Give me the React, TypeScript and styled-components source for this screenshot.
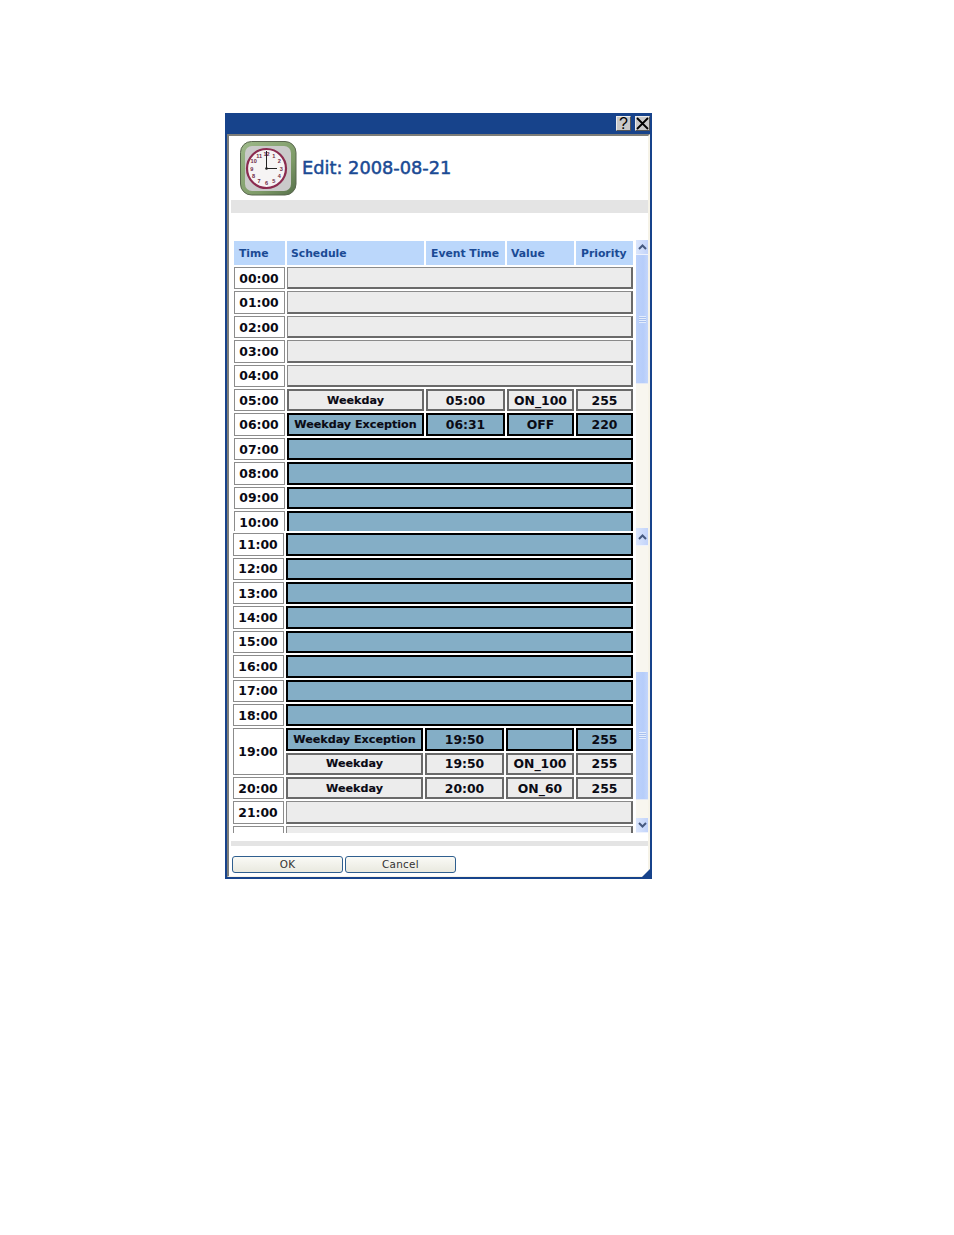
import React from "react";
import styled, { createGlobalStyle } from "styled-components";

const Global = createGlobalStyle`
  html, body { margin: 0; padding: 0; background: #fff; }
  body { font-family: "DejaVu Sans", Verdana, sans-serif; }
`;

const Page = styled.div`
  padding: 113px 0 0 225px;
  height: 1122px;
`;

const Dialog = styled.div`
  position: relative;
  box-sizing: border-box;
  width: 427px;
  height: 766px;
  background: #17438b;
  padding: 0 2px 2px 2px;
  display: flex;
  flex-direction: column;
`;

const TitleBar = styled.div`
  height: 21px;
  flex: none;
  display: flex;
  justify-content: flex-end;
  align-items: flex-start;
  gap: 4px;
  padding-top: 3px;
  box-sizing: border-box;
`;

const TitleButton = styled.div`
  width: 15px;
  height: 15px;
  box-sizing: border-box;
  background: #c8c8c8;
  border: 1px solid #ececec;
  border-right-color: #555;
  border-bottom-color: #555;
  color: #000;
  display: flex;
  align-items: center;
  justify-content: center;
  font: 400 16px "Liberation Sans", sans-serif;
  line-height: 1;
`;

const Panel = styled.div`
  flex: 1;
  min-height: 0;
  background: #fff;
  box-sizing: border-box;
  border-top: 2px solid #7d7d78;
  border-left: 2px solid #7d7d78;
  border-right: 2px solid #f6f3e8;
  border-bottom: 1px solid #f6f3e8;
  display: flex;
  flex-direction: column;
`;

const Header = styled.div`
  height: 64px;
  flex: none;
  box-sizing: border-box;
  padding: 5px 0 0 11px;
  display: flex;
  align-items: flex-start;
  gap: 5px;
`;

const Title = styled.h1`
  margin: 15px 0 0;
  font: 400 17.8px "DejaVu Sans", sans-serif;
  line-height: 24px;
  color: #1a4a94;
  -webkit-text-stroke: 0.5px #1a4a94;
  white-space: nowrap;
`;

const Band = styled.div<{ $h: number }>`
  flex: none;
  height: ${(p) => p.$h}px;
  margin-left: 2px;
  background: #e4e4e4;
`;

const Spacer = styled.div<{ $h: number }>`
  flex: none;
  height: ${(p) => p.$h}px;
`;

const Segment = styled.div<{ $h: number; $pl: number }>`
  flex: none;
  height: ${(p) => p.$h}px;
  padding-left: ${(p) => p.$pl}px;
  display: flex;
  align-items: flex-start;
`;

const Clip = styled.div<{ $h: number; $w: number; $pt: number }>`
  flex: none;
  width: ${(p) => p.$w}px;
  height: ${(p) => p.$h}px;
  box-sizing: border-box;
  padding-top: ${(p) => p.$pt}px;
  overflow: hidden;
`;

const Grid = styled.div<{ $cols: string; $head?: boolean }>`
  display: grid;
  grid-template-columns: ${(p) => p.$cols};
  ${(p) => (p.$head ? "grid-template-rows: 24.1px;" : "")}
  grid-auto-rows: 22.4px;
  gap: 2px;
`;

const HeadCell = styled.div<{ $pl: number }>`
  background: #bbd7fb;
  color: #1a4a94;
  font: 700 10.8px "DejaVu Sans", sans-serif;
  display: flex;
  align-items: flex-end;
  padding: 0 0 5px ${(p) => p.$pl}px;
  box-sizing: border-box;
  white-space: nowrap;
`;

const Cell = styled.div<{ $sel?: boolean; $span?: boolean; $name?: boolean }>`
  box-sizing: border-box;
  ${(p) => (p.$span ? "grid-column: 2 / -1;" : "")}
  background: ${(p) => (p.$sel ? "#84aec6" : "#ececec")};
  border: 2px solid ${(p) => (p.$sel ? "#000" : "#6a6a6a")};
  ${(p) =>
    p.$span && !p.$sel
      ? "border-top: 1px solid #8a8a8a; border-left: 1px solid #8a8a8a;"
      : ""}
  color: #0a0a14;
  font: 700 ${(p) => (p.$name ? "11.15px" : "12.4px")} "DejaVu Sans", sans-serif;
  ${(p) => (p.$name ? "-webkit-text-stroke: 0.15px #0a0a14;" : "")}
  display: flex;
  align-items: center;
  justify-content: center;
  white-space: nowrap;
`;

const TimeCell = styled.div<{ $rows?: number }>`
  box-sizing: border-box;
  grid-column: 1;
  grid-row: ${(p) => (p.$rows ? `span ${p.$rows}` : "auto")};
  background: #fff;
  border: 1px solid #8c8c8c;
  padding-right: 1px;
  color: #0a0a14;
  font: 700 12.4px "DejaVu Sans", sans-serif;
  display: flex;
  align-items: center;
  justify-content: center;
`;

const Scrollbar = styled.div<{ $h: number; $mt: number; $ml: number }>`
  flex: none;
  width: 12px;
  height: ${(p) => p.$h}px;
  margin: ${(p) => p.$mt}px 0 0 ${(p) => p.$ml}px;
  background: #f8f6ef;
  display: flex;
  flex-direction: column;
`;

const ScrollButton = styled.div<{ $h: number }>`
  flex: none;
  height: ${(p) => p.$h}px;
  background: linear-gradient(90deg, #dbe6fc, #c2d3fa);
  border-bottom: 1px solid #eef2fd;
  box-sizing: border-box;
  display: flex;
  align-items: center;
  justify-content: center;
`;

const Track = styled.div<{ $h?: number }>`
  flex: ${(p) => (p.$h ? "none" : "1")};
  height: ${(p) => (p.$h ? `${p.$h}px` : "auto")};
`;

const Thumb = styled.div<{ $h: number }>`
  flex: none;
  height: ${(p) => p.$h}px;
  background: linear-gradient(90deg, #bdd2fb, #b6cdfa 60%, #c4d6fb);
  border-bottom: 1px solid #e4e9f5;
  box-sizing: border-box;
  display: flex;
  align-items: center;
  justify-content: center;
`;

const Grip = styled.div`
  width: 7px;
  height: 7px;
  background: repeating-linear-gradient(180deg, #e4edfd 0 1px, #a9c1ef 1px 2px);
`;

const Footer = styled.div`
  flex: none;
  display: flex;
  gap: 2px;
  padding: 10px 0 0 3px;
`;

const OkButton = styled.button`
  width: 111px;
  height: 17px;
  padding: 0 0 2px;
  box-sizing: border-box;
  border: 1px solid #2f5f8f;
  border-radius: 3px;
  background: linear-gradient(180deg, #fafaf6, #e9e9df);
  color: #333;
  font: 400 10.4px "DejaVu Sans", sans-serif;
  letter-spacing: 0.3px;
`;

const ResizeCorner = styled.div`
  position: absolute;
  right: 0;
  bottom: 0;
  width: 0;
  height: 0;
  border-style: solid;
  border-width: 0 0 12px 12px;
  border-color: transparent transparent #17438b transparent;
`;

const Chevron = ({ up }: { up?: boolean }) => (
  <svg width="9" height="6" viewBox="0 0 9 6">
    <path
      d={up ? "M1 5L4.5 1.5L8 5" : "M1 1L4.5 4.5L8 1"}
      fill="none"
      stroke="#46597f"
      strokeWidth="2"
    />
  </svg>
);

const CLOCK_X = 26.5;
const CLOCK_Y = 27.5;

const ClockIcon = () => (
  <svg width="57" height="55" viewBox="0 0 57 55" style={{ flex: "none" }}>
    <defs>
      <linearGradient id="edge" x1="0" y1="0" x2="1" y2="1">
        <stop offset="0" stopColor="#9db98a" />
        <stop offset="0.65" stopColor="#7d9a67" />
        <stop offset="1" stopColor="#56704a" />
      </linearGradient>
    </defs>
    <rect x="0.5" y="0.5" width="55.5" height="53.5" rx="11" fill="url(#edge)" stroke="#59664f" />
    <rect x="5" y="5" width="46" height="45" rx="7" fill="#cacaca" />
    <circle cx={CLOCK_X} cy={CLOCK_Y} r="19.5" fill="#f6f4f4" stroke="#8b2b4f" strokeWidth="2.2" />
    {Array.from({ length: 12 }, (_, i) => {
      const n = i + 1;
      const a = (n * Math.PI) / 6;
      return (
        <text
          key={n}
          x={CLOCK_X + 14.8 * Math.sin(a)}
          y={CLOCK_Y - 14.8 * Math.cos(a) + 2}
          fontSize="5.6"
          fontWeight="700"
          fontFamily="Liberation Sans"
          fill="#6d2a46"
          textAnchor="middle"
        >
          {n}
        </text>
      );
    })}
    <path d={`M${CLOCK_X} ${CLOCK_Y}V10M${CLOCK_X} ${CLOCK_Y}H37`} stroke="#222" strokeWidth="1" fill="none" />
    <circle cx={CLOCK_X} cy={CLOCK_Y} r="1.3" fill="#222" />
  </svg>
);

type Row = {
  t: string;
  sel?: boolean;
  cells?: [string, string, string, string];
  extra?: [string, string, string, string];
};

const firstRows: Row[] = [
  { t: "00:00" }, { t: "01:00" }, { t: "02:00" }, { t: "03:00" }, { t: "04:00" },
  { t: "05:00", cells: ["Weekday", "05:00", "ON_100", "255"] },
  { t: "06:00", sel: true, cells: ["Weekday Exception", "06:31", "OFF", "220"] },
  { t: "07:00", sel: true }, { t: "08:00", sel: true }, { t: "09:00", sel: true }, { t: "10:00", sel: true },
];

const secondRows: Row[] = [
  { t: "11:00", sel: true }, { t: "12:00", sel: true }, { t: "13:00", sel: true }, { t: "14:00", sel: true },
  { t: "15:00", sel: true }, { t: "16:00", sel: true }, { t: "17:00", sel: true }, { t: "18:00", sel: true },
  {
    t: "19:00", sel: true,
    cells: ["Weekday Exception", "19:50", "", "255"],
    extra: ["Weekday", "19:50", "ON_100", "255"],
  },
  { t: "20:00", cells: ["Weekday", "20:00", "ON_60", "255"] },
  { t: "21:00" },
];

const Rows = ({ rows }: { rows: Row[] }) => (
  <>
    {rows.map((r) => (
      <React.Fragment key={r.t}>
        <TimeCell $rows={r.extra ? 2 : undefined}>{r.t}</TimeCell>
        {r.cells ? (
          r.cells.map((c, i) => (
            <Cell key={i} $sel={r.sel} $name={i === 0}>{c}</Cell>
          ))
        ) : (
          <Cell $span $sel={r.sel} />
        )}
        {r.extra?.map((c, i) => (
          <Cell key={`x${i}`} $name={i === 0}>{c}</Cell>
        ))}
      </React.Fragment>
    ))}
  </>
);

export default function App() {
  return (
    <Page>
      <Global />
      <Dialog>
        <TitleBar>
          <TitleButton>?</TitleButton>
          <TitleButton>
            <svg width="13" height="13" viewBox="0 0 13 13">
              <path d="M1 1L12 12M12 1L1 12" stroke="#000" strokeWidth="1.8" />
            </svg>
          </TitleButton>
        </TitleBar>
        <Panel>
          <Header>
            <ClockIcon />
            <Title>Edit: 2008-08-21</Title>
          </Header>
          <Band $h={13} />
          <Spacer $h={27} />
          <Segment $h={291} $pl={5}>
            <Clip $w={399} $h={291} $pt={1}>
              <Grid $head $cols="51px 137px 79px 67px 57px">
                <HeadCell $pl={5}>Time</HeadCell>
                <HeadCell $pl={4}>Schedule</HeadCell>
                <HeadCell $pl={5}>Event Time</HeadCell>
                <HeadCell $pl={4}>Value</HeadCell>
                <HeadCell $pl={5}>Priority</HeadCell>
                <Rows rows={firstRows} />
              </Grid>
            </Clip>
            <Scrollbar $h={288} $mt={0} $ml={3}>
              <ScrollButton $h={15}><Chevron up /></ScrollButton>
              <Thumb $h={129}><Grip /></Thumb>
              <Track />
            </Scrollbar>
          </Segment>
          <Segment $h={302} $pl={4}>
            <Clip $w={400} $h={302} $pt={2.2}>
              <Grid $cols="51px 137px 79px 68px 57px">
                <Rows rows={secondRows} />
                <TimeCell />
                <Cell $span />
              </Grid>
            </Clip>
            <Scrollbar $h={305} $mt={-3} $ml={3}>
              <ScrollButton $h={18}><Chevron up /></ScrollButton>
              <Track $h={126} />
              <Thumb $h={128}><Grip /></Thumb>
              <Track />
              <ScrollButton $h={15}><Chevron /></ScrollButton>
            </Scrollbar>
          </Segment>
          <Spacer $h={8} />
          <Band $h={5} />
          <Footer>
            <OkButton>OK</OkButton>
            <OkButton>Cancel</OkButton>
          </Footer>
        </Panel>
        <ResizeCorner />
      </Dialog>
    </Page>
  );
}
